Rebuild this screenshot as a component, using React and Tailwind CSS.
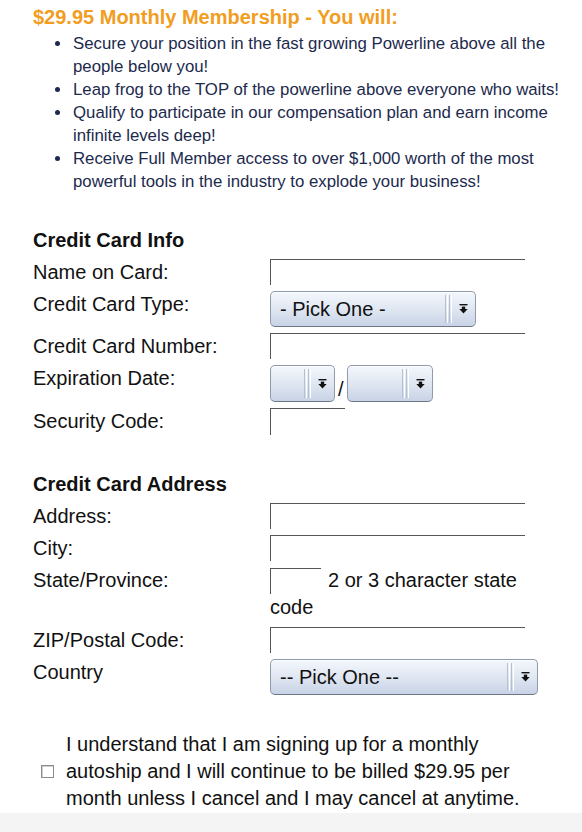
import React from "react";

const font = { fontFamily: '"Liberation Sans", Arial, Helvetica, sans-serif' };

function ArrowIcon() {
  return (
    <svg width="9" height="10" viewBox="0 0 9 10" className="block">
      <rect x="0.5" y="0" width="8" height="1.4" fill="#111" />
      <rect x="2.8" y="2.6" width="3.4" height="2.8" fill="#111" />
      <polygon points="0.3,5 8.7,5 4.5,9.6" fill="#111" />
    </svg>
  );
}

function FakeSelect({ width, label, height = "h-[36px]" }) {
  return (
    <div
      className={`relative flex items-center ${height} rounded-[5px] border border-[#8f9aab] border-b-[#6d7685] bg-gradient-to-b from-[#f4f7fc] via-[#e0e7f2] to-[#c8d3e6] shadow-[inset_0_1px_0_#ffffff]`}
      style={{ width }}
    >
      <span className="pl-[9px] text-[20px] leading-none text-[#111] whitespace-nowrap">{label}</span>
      <div className="absolute right-[23px] top-[3px] bottom-[3px] flex gap-[1px]">
        <div className="w-[1px] bg-[#b7c0cf]" />
        <div className="w-[1px] bg-[#ffffff]" />
        <div className="w-[1px] bg-[#b7c0cf]" />
        <div className="w-[1px] bg-[#ffffff]" />
      </div>
      <div className="absolute right-[7px] top-1/2 -translate-y-1/2">
        <ArrowIcon />
      </div>
    </div>
  );
}

function TextBox({ width = "w-[255px]", height = "h-[26px]" }) {
  return <div className={`${width} ${height} border-t border-l border-[#555] bg-white`} />;
}

function Row({ label, children }) {
  return (
    <>
      <div className="text-[20px] leading-[26px] text-[#111] whitespace-nowrap">{label}</div>
      <div>{children}</div>
    </>
  );
}

export default function App() {
  const bullets = [
    ["Secure your position in the fast growing Powerline above all the", "people below you!"],
    ["Leap frog to the TOP of the powerline above everyone who waits!"],
    ["Qualify to participate in our compensation plan and earn income", "infinite levels deep!"],
    ["Receive Full Member access to over $1,000 worth of the most", "powerful tools in the industry to explode your business!"],
  ];
  return (
    <div className="w-[582px] min-h-[832px] bg-[#f4f4f4] flex flex-col" style={font}>
      <div className="bg-white pl-[33px] pt-[5px] pb-[1px]">
        <h1 className="text-[20px] font-bold leading-[24px] text-[#f29d1f] whitespace-nowrap">
          $29.95 Monthly Membership - You will:
        </h1>
        <ul className="mt-[3px] pl-[40px]">
          {bullets.map((lines, i) => (
            <li key={i} className="relative text-[16.8px] leading-[23px] text-[#1c2a4d] whitespace-nowrap">
              <span className="absolute left-[-18px] top-[9px] w-[5px] h-[5px] rounded-full bg-[#1c2a4d]" />
              {lines.map((l, j) => (
                <div key={j}>{l}</div>
              ))}
            </li>
          ))}
        </ul>

        <h2 className="mt-[34px] text-[20px] font-bold leading-[26px] text-[#111]">Credit Card Info</h2>
        <div className="mt-[6px] grid grid-cols-[237px_1fr] gap-y-[6px]">
          <Row label="Name on Card:">
            <TextBox />
          </Row>
          <Row label="Credit Card Type:">
            <FakeSelect width="206px" label="- Pick One -" />
          </Row>
          <Row label="Credit Card Number:">
            <TextBox />
          </Row>
          <Row label="Expiration Date:">
            <div className="flex items-end">
              <FakeSelect width="65px" label="" height="h-[37px]" />
              <span className="mx-[3px] mb-[2px] text-[20px] leading-[22px] text-[#111]">/</span>
              <FakeSelect width="86px" label="" height="h-[37px]" />
            </div>
          </Row>
          <Row label="Security Code:">
            <TextBox width="w-[75px]" height="h-[27px]" />
          </Row>
        </div>

        <h2 className="mt-[36px] text-[20px] font-bold leading-[26px] text-[#111]">Credit Card Address</h2>
        <div className="mt-[6px] grid grid-cols-[237px_1fr] gap-y-[6px]">
          <Row label="Address:">
            <TextBox />
          </Row>
          <Row label="City:">
            <TextBox />
          </Row>
          <Row label="State/Province:">
            <div className="text-[20px] leading-[27px] text-[#111]">
              <div className="flex items-center">
                <TextBox width="w-[51px]" />
                <span className="ml-[7px]">2 or 3 character state</span>
              </div>
              <div>code</div>
            </div>
          </Row>
          <Row label="ZIP/Postal Code:">
            <TextBox />
          </Row>
          <Row label="Country">
            <FakeSelect width="268px" label="-- Pick One --" />
          </Row>
        </div>

        <div className="mt-[36px] flex items-center">
          <div className="ml-[8px] w-[13px] h-[13px] border border-[#8c8c8c] bg-white shadow-[inset_1px_1px_0_#cfcfcf]" />
          <div className="ml-[12px] text-[20px] leading-[27px] text-[#111] whitespace-nowrap">
            <div>I understand that I am signing up for a monthly</div>
            <div>autoship and I will continue to be billed $29.95 per</div>
            <div>month unless I cancel and I may cancel at anytime.</div>
          </div>
        </div>
      </div>
      <div className="flex-1 bg-[#f4f4f4]" />
    </div>
  );
}
